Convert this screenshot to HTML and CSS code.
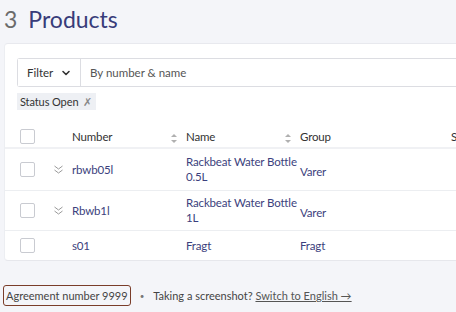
FILE: index.html
```html
<!DOCTYPE html>
<html lang="en">
<head>
  <meta charset="UTF-8">
  <title>Products</title>
  <link rel="stylesheet" href="styles.css">
</head>
<body>
  <header class="page-head">
    <span class="count">3</span>
    <h1>Products</h1>
  </header>
  <div class="card">
    <div class="search">
      <button class="filter-btn">Filter
        <svg width="10" height="10" viewBox="0 0 10 10"><path d="M2 3.5 5 6.5 8 3.5" fill="none" stroke="#333" stroke-width="1.6" stroke-linecap="round" stroke-linejoin="round"/></svg>
      </button>
      <input type="text" placeholder="By number &amp; name">
    </div>
    <div class="chips">
      <span class="chip">Status Open <span class="chip-x">✗</span></span>
    </div>
    <table class="products">
      <colgroup>
        <col class="w-check"><col class="w-exp"><col class="w-num"><col class="w-name"><col class="w-group"><col class="w-s">
      </colgroup>
      <thead>
        <tr>
          <th class="col-check"><span class="box"></span></th>
          <th></th>
          <th>Number<span class="sort"></span></th>
          <th>Name<span class="sort"></span></th>
          <th>Group</th>
          <th>S</th>
        </tr>
      </thead>
      <tbody>
        <tr class="r1">
          <td class="col-check"><span class="box"></span></td>
          <td class="col-exp"><svg width="11" height="11" viewBox="0 0 11 11"><path d="M1.5 2 5.5 5 9.5 2M1.5 6 5.5 9 9.5 6" fill="none" stroke="#9a9a9a" stroke-width="1"/></svg></td>
          <td>rbwb05l</td>
          <td><a href="#">Rackbeat Water Bottle<br>0.5L</a></td>
          <td class="low">Varer</td>
          <td></td>
        </tr>
        <tr class="r2">
          <td class="col-check"><span class="box"></span></td>
          <td class="col-exp"><svg width="11" height="11" viewBox="0 0 11 11"><path d="M1.5 2 5.5 5 9.5 2M1.5 6 5.5 9 9.5 6" fill="none" stroke="#9a9a9a" stroke-width="1"/></svg></td>
          <td>Rbwb1l</td>
          <td><a href="#">Rackbeat Water Bottle<br>1L</a></td>
          <td class="low">Varer</td>
          <td></td>
        </tr>
        <tr class="r3">
          <td class="col-check"><span class="box"></span></td>
          <td></td>
          <td>s01</td>
          <td><a href="#">Fragt</a></td>
          <td>Fragt</td>
          <td></td>
        </tr>
      </tbody>
    </table>
  </div>
  <footer class="foot">
    <span class="agreement">Agreement number 9999</span>
    <span class="dot">•</span>
    <span>Taking a screenshot? <a href="#">Switch to English →</a></span>
  </footer>
</body>
</html>
```

FILE: styles.css
```css
body {
  font-family: Lato, 'Segoe UI', Arial, sans-serif;
  background: #f4f5f9;
  color: #333;
  margin: 0;
  font-size: 11px;
  overflow: hidden;
  width: 456px;
  height: 312px;
}
.page-head {
  display: flex;
  align-items: baseline;
  gap: 11px;
  padding: 5px 0 0 4px;
  height: 43px;
  box-sizing: border-box;
}
.count {
  font-size: 23px;
  color: #6b6b6b;
}
.page-head h1 {
  margin: 0;
  font-size: 23px;
  font-weight: 400;
  color: #383c7a;
  line-height: 28px;
}
.card {
  background: #fff;
  margin-left: 4px;
  width: 490px;
  height: 218px;
  border-top: 1px solid #e8e9ee;
  border-bottom: 1px solid #e6e7ec;
  border-left: 1px solid #eceef2;
  border-radius: 4px 0 0 4px;
  padding: 14px 0 0 12px;
  box-sizing: border-box;
  overflow: hidden;
}
.search {
  display: flex;
  height: 27px;
  border: 1px solid #dcdde2;
  border-right: none;
  border-radius: 3px 0 0 3px;
}
.filter-btn {
  display: flex;
  align-items: center;
  gap: 8px;
  font: inherit;
  font-size: 11.5px;
  color: #333;
  background: #fff;
  border: none;
  border-right: 1px solid #dcdde2;
  padding: 0 0 0 9px;
  width: 63px;
}
.search input {
  font: inherit;
  font-size: 11.5px;
  border: none;
  padding: 0 9px;
  flex: 1;
  color: #333;
}
.search input::placeholder {
  color: #555;
}
.chips {
  padding: 6px 0 0 0;
  height: 17px;
}
.chip {
  display: inline-block;
  background: #eef0f4;
  padding: 1px 4px 1px 3px;
  line-height: 15px;
  color: #333;
  letter-spacing: -0.1px;
}
.chip-x {
  color: #888;
  margin-left: 2px;
}
.products {
  border-collapse: collapse;
  table-layout: fixed;
  width: 489px;
  margin-top: 15px;
  margin-left: -12px;
  font-size: 11.5px;
  letter-spacing: -0.15px;
}
.w-check { width: 48px; }
.w-exp { width: 19px; }
.w-num { width: 114px; }
.w-name { width: 114px; }
.w-group { width: 151px; }
.products th {
  font-weight: 400;
  text-align: left;
  height: 22px;
  padding: 0;
  border-bottom: 2px solid #f0f1f4;
  white-space: nowrap;
  color: #333;
}
.products td {
  padding: 0;
  border-bottom: 1px solid #eceef1;
  vertical-align: middle;
  white-space: nowrap;
  color: #3c3f7d;
}
.products tr.r1 {
  height: 42px;
}
.products tr.r2 {
  height: 40px;
}
.products tr.r3 {
  height: 30px;
}
.products tr.r3 td {
  border-bottom: none;
}
.products a {
  color: #3c3f7d;
  text-decoration: none;
  display: block;
  line-height: 15px;
}
.products td.low {
  padding-top: 4px;
}
.products .col-check {
  padding-left: 15px;
}
.col-exp svg {
  display: block;
}
.box {
  display: block;
  width: 13px;
  height: 13px;
  border: 1px solid #c9cbd1;
  border-radius: 2px;
}
.sort {
  float: right;
  margin-right: 9px;
  margin-top: 4px;
  width: 6px;
  height: 9px;
  position: relative;
}
.sort::before, .sort::after {
  content: "";
  position: absolute;
  left: 0;
  border-left: 3px solid transparent;
  border-right: 3px solid transparent;
}
.sort::before {
  top: 0;
  border-bottom: 3px solid #b0b0b0;
}
.sort::after {
  bottom: 0;
  border-top: 3px solid #b0b0b0;
}
.foot {
  display: flex;
  align-items: center;
  gap: 7px;
  padding: 24px 0 0 3px;
  color: #444;
}
.agreement {
  border: 1px solid #7a3d2a;
  border-radius: 3px;
  padding: 3px 2px;
  color: #444;
}
.dot {
  color: #777;
  font-size: 8px;
  margin: 0 2px;
}
.foot a {
  color: #555;
}
```
